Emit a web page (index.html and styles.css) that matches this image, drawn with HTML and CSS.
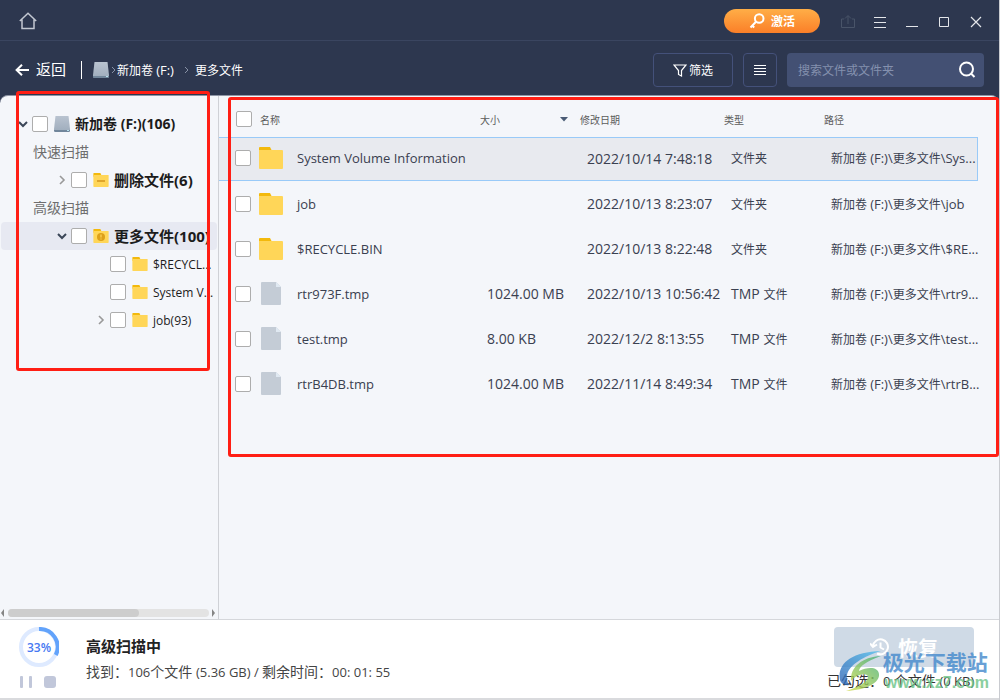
FILE: index.html
```html
<!DOCTYPE html>
<html lang="zh-CN">
<head>
<meta charset="utf-8">
<title>数据恢复</title>
<link rel="stylesheet" href="styles.css">
</head>
<body>
<svg class="defs" aria-hidden="true">
  <defs>
    <linearGradient id="disk-fill" x1="0" y1="0" x2="0" y2="1"><stop offset="0" stop-color="#b9c3d0"/><stop offset="1" stop-color="#9eacbc"/></linearGradient>
    <linearGradient id="swoosh-blue" x1="0" y1="1" x2="1" y2="0"><stop offset="0" stop-color="#2a62b5"/><stop offset="1" stop-color="#55c1ee"/></linearGradient>
    <linearGradient id="swoosh-green" x1="0" y1="1" x2="1" y2="0"><stop offset="0" stop-color="#d3dc45"/><stop offset="1" stop-color="#3fae7c"/></linearGradient>
    <symbol id="disk" viewBox="0 0 16 16"><path d="M1.500 0h13l1.500 13v2l-1 1H1l-1-1v-2z" fill="url(#disk-fill)"/><path d="M0 14h16v1l-1 1H1l-1-1z" fill="#71869b"/><path d="M13 14h2v1h-2z" fill="#b9e2ee"/></symbol>
    <symbol id="folder" viewBox="0 0 24 22"><path d="M0 1q0-1 1-1h10l1.500 3v3H0z" fill="#f3b90c"/><path d="M0 3h23q1 0 1 1v17q0 1-1 1H1q-1 0-1-1z" fill="#ffd658"/></symbol>
    <symbol id="file" viewBox="0 0 20 23"><path d="M1 0h14l5 5v17q0 1-1 1H1q-1 0-1-1V1q0-1 1-1z" fill="#c4ccd6"/><path d="M15 0l5 5h-5z" fill="#e0e9f2"/></symbol>
    <symbol id="down" viewBox="0 0 10 10"><path d="M1 3l4 4 4-4" fill="none" stroke="#3b4658" stroke-width="2"/></symbol>
    <symbol id="right" viewBox="0 0 10 10"><path d="M3 1l4 4-4 4" fill="none" stroke="#999" stroke-width="1.600"/></symbol>
  </defs>
</svg>
<div class="app">
  <header class="titlebar">
    <button class="plain" aria-label="主页"><svg width="18" height="18" viewBox="0 0 18 18" fill="none" stroke="#c3c8d2" stroke-width="1.500"><path d="M.8 9L9 1.200 17.200 9M3 7.500v9h12v-9"/></svg></button>
    <span class="spacer"></span>
    <button class="activate"><svg width="16" height="16" viewBox="0 0 16 16" fill="none" stroke="#fff" stroke-width="2"><circle cx="10.200" cy="5.500" r="4.300"/><path d="M7.200 8.500L1.500 14.500M3.200 12.500l2 2"/></svg><span>激活</span></button>
    <div class="window-buttons">
      <button class="plain" aria-label="导出"><svg width="16" height="16" viewBox="0 0 16 16" fill="none" stroke="#495469"><path d="M4 5H1.500v8.500h13V5H12M8 10V2M5 4.500L8 1.500l3 3"/></svg></button>
      <button class="plain" aria-label="菜单"><svg width="16" height="16" viewBox="0 0 16 16" stroke="#e4e6ea"><path d="M2 3.500h12M2 8.500h12M2 13.500h12"/></svg></button>
      <button class="plain" aria-label="最小化"><svg width="16" height="16" viewBox="0 0 16 16" stroke="#e4e6ea"><path d="M2 12.500h12"/></svg></button>
      <button class="plain" aria-label="最大化"><svg width="16" height="16" viewBox="0 0 16 16" fill="none" stroke="#e4e6ea"><path d="M3.500 3.500h9v9h-9z"/></svg></button>
      <button class="plain" aria-label="关闭"><svg width="16" height="16" viewBox="0 0 16 16" stroke="#e4e6ea" stroke-width="1.200"><path d="M3 3l10 10M13 3L3 13"/></svg></button>
    </div>
  </header>
  <div class="toolbar">
    <button class="plain back"><svg width="14" height="12" viewBox="0 0 14 12" fill="none" stroke="#fff" stroke-width="2"><path d="M14 6H1.500M7 .8L1.600 6 7 11.200"/></svg><span>返回</span></button>
    <nav class="crumbs">
      <svg width="16" height="16"><use href="#disk"/></svg>
      <svg class="sep-first" width="6" height="8" viewBox="0 0 6 8" fill="none" stroke="#8791a5"><path d="M1 1l3 3-3 3"/></svg>
      <a href="#">新加卷 <span class="lat">(F:)</span></a>
      <svg class="sep" width="6" height="8" viewBox="0 0 6 8" fill="none" stroke="#8791a5"><path d="M1 1l3 3-3 3"/></svg>
      <a href="#">更多文件</a>
    </nav>
    <button class="tool filter"><svg width="14" height="13" viewBox="0 0 14 13" fill="none" stroke="#fff" stroke-width="1.200"><path d="M1 1h12L8.500 6.500v5.500L5.500 10.500V6.500z"/></svg><span>筛选</span></button>
    <button class="tool view" aria-label="列表视图"><svg width="12" height="12" viewBox="0 0 12 12" stroke="#fff"><path d="M0 1.500h12M0 4.500h12M0 7.500h12M0 10.500h12"/></svg></button>
    <label class="search"><input type="text" placeholder="搜索文件或文件夹" aria-label="搜索文件或文件夹"><svg width="18" height="18" viewBox="0 0 18 18" fill="none" stroke="#fff" stroke-width="2"><circle cx="8.500" cy="8" r="6.500"/><path d="M13 12.500l3.500 3.500"/></svg></label>
  </div>
  <div class="body">
    <aside class="sidebar">
      <ul class="tree">
        <li class="node root"><svg class="arrow" width="10" height="10"><use href="#down"/></svg><input type="checkbox" id="n1"><svg width="16" height="16"><use href="#disk"/></svg><label for="n1">新加卷 (F:)(106)</label></li>
        <li class="group">快速扫描</li>
        <li class="node sub"><svg class="arrow" width="10" height="10"><use href="#right"/></svg><input type="checkbox" id="n2"><svg width="16" height="14" viewBox="0 0 16 14"><use href="#folder" width="16" height="14"/><path d="M4 8h8" stroke="#d4941c" stroke-width="1.500"/></svg><label for="n2">删除文件(6)</label></li>
        <li class="group">高级扫描</li>
        <li class="node sub selected"><svg class="arrow" width="10" height="10"><use href="#down"/></svg><input type="checkbox" id="n3"><svg width="16" height="14" viewBox="0 0 16 14"><use href="#folder" width="16" height="14"/><circle cx="8" cy="8" r="4" fill="#dda019"/><path d="M8 5.500v3M8 9.500v1" stroke="#ffd658" stroke-width="1.200"/></svg><label for="n3">更多文件(100)</label></li>
        <li class="node leaf"><span class="arrow"></span><input type="checkbox" id="n4"><svg width="16" height="14" viewBox="0 0 16 14"><use href="#folder" width="16" height="14"/></svg><label for="n4">$RECYCL...</label></li>
        <li class="node leaf"><span class="arrow"></span><input type="checkbox" id="n5"><svg width="16" height="14" viewBox="0 0 16 14"><use href="#folder" width="16" height="14"/></svg><label for="n5">System V...</label></li>
        <li class="node leaf"><svg class="arrow" width="10" height="10"><use href="#right"/></svg><input type="checkbox" id="n6"><svg width="16" height="14" viewBox="0 0 16 14"><use href="#folder" width="16" height="14"/></svg><label for="n6">job(93)</label></li>
      </ul>
      <div class="hscroll">
        <svg width="8" height="8" viewBox="0 0 8 8"><path d="M4 0v8L1 4z" fill="#858585"/></svg>
        <div class="track"><div class="thumb"></div></div>
        <svg width="9" height="8" viewBox="0 0 9 8"><path d="M3 0v8l3-4z" fill="#858585"/></svg>
      </div>
      <div class="mark mark-tree"></div>
    </aside>
    <main class="files">
      <table>
        <colgroup><col class="c-check"><col class="c-name"><col class="c-size"><col class="c-date"><col class="c-type"><col class="c-path"></colgroup>
        <thead><tr><th class="check"><input type="checkbox" aria-label="全选"></th><th>名称</th><th><span class="sortable">大小<svg width="8" height="5" viewBox="0 0 8 5"><path d="M0 0h8L4 4.500z" fill="#4a5b75"/></svg></span></th><th>修改日期</th><th>类型</th><th>路径</th></tr></thead>
        <tbody>
          <tr class="active"><td class="check"><input type="checkbox" id="f1"></td><td><label class="name" for="f1"><svg width="24" height="22"><use href="#folder"/></svg>System Volume Information</label></td><td></td><td>2022/10/14 7:48:18</td><td class="zh">文件夹</td><td class="zh">新加卷 <span class="lat">(F:)\</span>更多文件<span class="lat">\Sys...</span></td></tr>
          <tr><td class="check"><input type="checkbox" id="f2"></td><td><label class="name" for="f2"><svg width="24" height="22"><use href="#folder"/></svg>job</label></td><td></td><td>2022/10/13 8:23:07</td><td class="zh">文件夹</td><td class="zh">新加卷 <span class="lat">(F:)\</span>更多文件<span class="lat">\job</span></td></tr>
          <tr><td class="check"><input type="checkbox" id="f3"></td><td><label class="name" for="f3"><svg width="24" height="22"><use href="#folder"/></svg>$RECYCLE.BIN</label></td><td></td><td>2022/10/13 8:22:48</td><td class="zh">文件夹</td><td class="zh">新加卷 <span class="lat">(F:)\</span>更多文件<span class="lat">\$RE...</span></td></tr>
          <tr><td class="check"><input type="checkbox" id="f4"></td><td><label class="name" for="f4"><svg width="24" height="23"><use href="#file"/></svg>rtr973F.tmp</label></td><td>1024.00 MB</td><td>2022/10/13 10:56:42</td><td class="zh"><span class="tmp">TMP </span>文件</td><td class="zh">新加卷 <span class="lat">(F:)\</span>更多文件<span class="lat">\rtr9...</span></td></tr>
          <tr><td class="check"><input type="checkbox" id="f5"></td><td><label class="name" for="f5"><svg width="24" height="23"><use href="#file"/></svg>test.tmp</label></td><td>8.00 KB</td><td>2022/12/2 8:13:55</td><td class="zh"><span class="tmp">TMP </span>文件</td><td class="zh">新加卷 <span class="lat">(F:)\</span>更多文件<span class="lat">\test...</span></td></tr>
          <tr><td class="check"><input type="checkbox" id="f6"></td><td><label class="name" for="f6"><svg width="24" height="23"><use href="#file"/></svg>rtrB4DB.tmp</label></td><td>1024.00 MB</td><td>2022/11/14 8:49:34</td><td class="zh"><span class="tmp">TMP </span>文件</td><td class="zh">新加卷 <span class="lat">(F:)\</span>更多文件<span class="lat">\rtrB...</span></td></tr>
        </tbody>
      </table>
      <div class="mark mark-files"></div>
    </main>
  </div>
  <footer class="status">
    <div class="progress">
      <div class="ring"><svg width="40" height="40" viewBox="0 0 40 40" fill="none" stroke-width="4"><circle cx="20" cy="20" r="18" stroke="#deeaff"/><path d="M20 2A18 18 0 0 1 36.800 28" stroke="#62a3fb"/></svg><span class="percent">33%</span></div>
      <div class="controls">
        <button class="plain" aria-label="暂停"><svg width="12" height="12" viewBox="0 0 12 12" fill="#c1c7da"><rect width="3" height="12" rx="1"/><rect x="9" width="3" height="12" rx="1"/></svg></button>
        <button class="plain" aria-label="停止"><svg width="12" height="12" viewBox="0 0 12 12" fill="#c1c7da"><rect width="12" height="12" rx="3"/></svg></button>
      </div>
    </div>
    <div class="scan">
      <div class="scan-title">高级扫描中</div>
      <div class="scan-info"><span>找到：</span><span><span class="lat">106</span>个文件 <span class="lat">(5.36 GB) / </span>剩余时间：</span><span class="lat">00: 01: 55</span></div>
    </div>
    <div class="recover-area">
      <button class="recover" disabled><svg width="20" height="18" viewBox="0 0 20 18" fill="none" stroke="#fff" stroke-width="2"><path d="M3 8A7.500 7.500 0 1 1 7 15.500M0 5.500L3 9l4-2.500M10.500 4.500V9.500l3.500 2"/></svg><span>恢复</span></button>
      <div class="selected-info">已勾选：<span class="lat">0 </span>个文件 <span class="lat">(0 KB)</span></div>
      <div class="watermark">
        <svg width="44" height="42" viewBox="0 0 44 42"><path d="M1 30C-2 14 12 2 42 1 25 6 10 15 8 25c-.5 3 0 7 2 10C5 36 2 33 1 30z" fill="url(#swoosh-blue)"/><path d="M12 31c-1-14 11-24 30-25-15 5-22 11-22 15 8-4 19-5 20 3 1 9-13 16-33 17 10-3 22-9 22-14 0-5-12-3-17 4z" fill="url(#swoosh-green)"/></svg>
        <div><div class="wm-name">极光下载站</div><div class="wm-url">www.xz7.com</div></div>
      </div>
    </div>
  </footer>
</div>
</body>
</html>
```
FILE: styles.css
```css
* { box-sizing: border-box; }
body {
  margin: 0;
  font-family: "Open Sans", "Noto Sans CJK SC", sans-serif;
  font-size: 13px;
  color: #3a4050;
}
.defs { position: absolute; width: 0; height: 0; }
svg { flex: none; display: block; }
button { font: inherit; padding: 0; }
.plain { border: 0; background: none; color: inherit; }
.app {
  display: flex;
  flex-direction: column;
  height: 100vh;
  background: #2d374f;
  border-right: 1px solid #c9cbd0;
}
.spacer { flex: 1; }
.lat { font-size: 13px; }
.tmp { font-size: 14px; }

.titlebar {
  display: flex;
  align-items: center;
  height: 41px;
  flex: none;
  padding: 2px 15px 0 19px;
  border-bottom: 1px solid #3a4560;
}
.activate {
  display: flex;
  align-items: center;
  justify-content: center;
  gap: 6px;
  width: 96px;
  height: 24px;
  border: 0;
  border-radius: 12px;
  background: linear-gradient(#ffae47, #fb7f28);
  color: #fff;
  font-size: 12px;
  font-weight: 700;
}
.window-buttons { display: flex; gap: 16px; margin-left: 20px; padding-top: 2px; }

.toolbar {
  display: flex;
  align-items: center;
  height: 54px;
  flex: none;
  padding: 4px 15px 0;
  color: #fff;
  font-size: 12px;
}
.back { display: flex; align-items: center; gap: 7px; font-size: 15px; line-height: 20px; padding-right: 15px; border-right: 1px solid #fff; }
.back span { margin-top: -2px; }
.crumbs { display: flex; align-items: center; flex: 1; margin-left: 11px; white-space: nowrap; }
.crumbs a { color: #fff; text-decoration: none; }
.sep-first { margin: 0 0 0 2px; }
.sep { margin: 0 5px 0 10px; }
.tool {
  display: flex;
  align-items: center;
  justify-content: center;
  gap: 2px;
  height: 34px;
  border: 1px solid #44517a;
  border-radius: 4px;
  background: none;
  color: #fff;
}
.filter { width: 80px; margin-right: 10px; }
.view { width: 34px; margin-right: 10px; }
.search {
  display: flex;
  align-items: center;
  width: 197px;
  height: 34px;
  padding: 0 8px 0 11px;
  border-radius: 4px;
  background: #435073;
}
.search input { flex: 1; min-width: 0; padding: 0; border: 0; outline: 0; background: none; font: inherit; color: #fff; }
.search input::placeholder { color: #8490ae; opacity: 1; }

.body {
  display: flex;
  flex: 1;
  min-height: 0;
  background: #f4f6fa;
  border-top: 1px solid #8e95a5;
  border-radius: 8px 8px 0 0;
}
input[type="checkbox"] {
  appearance: none;
  flex: none;
  display: block;
  width: 16px;
  height: 16px;
  margin: 0;
  border: 1px solid #adadad;
  border-radius: 2px;
  background: #fff;
}
.sidebar {
  position: relative;
  display: flex;
  flex-direction: column;
  width: 219px;
  flex: none;
  border-right: 1px solid #cfd1d6;
}
.tree { flex: 1; margin: 0; padding: 14px 1px 0; list-style: none; color: #1c1c1c; }
.tree li { height: 28px; line-height: 28px; white-space: nowrap; }
.node { display: flex; align-items: center; }
.arrow { width: 10px; margin-right: 4px; }
.node input { margin-right: 6px; }
.node label { margin-left: 5px; }
.root { padding-left: 17px; }
.sub { padding-left: 56px; }
.leaf { padding-left: 95px; }
.root label, .sub label { font-size: 15px; font-weight: 700; }
.root label { font-size: 14px; }
.leaf label { font-size: 12px; padding-top: 1px; }
.group { padding-left: 32px; font-size: 14px; color: #6e6e6e; }
.selected { background: #e7e9f2; border-radius: 4px; }
.hscroll { display: flex; align-items: center; height: 12px; }
.track { flex: 1; height: 8px; border-radius: 4px; background: #e3e3e3; }
.thumb { width: 65%; height: 8px; border-radius: 4px; background: #cdcdcd; }

.files { position: relative; flex: 1; min-width: 0; padding: 1px 21px 0 0; }
table { width: 100%; border-collapse: separate; border-spacing: 0; table-layout: fixed; }
.c-check { width: 41px; }
.c-name { width: 220px; }
.c-size { width: 100px; }
.c-date { width: 144px; }
.c-type { width: 100px; }
th { height: 40px; padding: 5px 0 0; text-align: left; font-size: 10px; font-weight: 400; color: #5c5c5c; }
td { height: 45px; padding: 0 0 2px 7px; font-size: 14px; white-space: nowrap; }
td.zh { font-size: 12px; }
th.check { padding: 4px 0 0 17px; }
td.check { padding: 0 0 2px 16px; }
td:nth-child(2) { padding: 0 0 2px; }
.sortable { display: flex; align-items: center; justify-content: space-between; padding-right: 12px; }
.name { display: flex; align-items: center; gap: 14px; margin-left: -1px; font-size: 13px; }
.active td { height: 44px; background: #e8eaef; border-top: 1px solid #99caf8; border-bottom: 1px solid #99caf8; }
.active td:last-child { border-right: 1px solid #99caf8; }
.active + tr td { height: 46px; padding-top: 1px; }

.mark { position: absolute; border: 3px solid #ff1e14; border-radius: 3px; pointer-events: none; }
.mark-tree { top: -5px; left: 16px; right: 8px; height: 280px; }
.mark-files { top: 1px; left: 9px; right: 0; height: 360px; }

.status {
  display: flex;
  flex: none;
  height: 81px;
  padding: 7px 10px 0 19px;
  background: #fff;
  border-top: 1px solid #d5d7db;
  border-bottom: 2px solid #d9dadd;
}
.progress { width: 40px; }
.ring { display: grid; place-items: center; }
.ring svg, .percent { grid-area: 1 / 1; }
.percent { font-size: 12px; font-weight: 600; color: #4678f2; }
.controls { display: flex; gap: 12px; margin-top: 9px; padding-left: 1px; }
.scan { flex: 1; margin-left: 27px; padding-top: 8px; color: #222; white-space: nowrap; }
.scan-title { font-size: 15px; font-weight: 700; line-height: 22px; }
.scan-info { display: flex; align-items: baseline; margin-top: 4px; line-height: 22px; font-size: 14px; color: #444; }
.recover-area { position: relative; width: 164px; }
.recover {
  display: flex;
  align-items: center;
  justify-content: center;
  gap: 8px;
  width: 140px;
  height: 40px;
  margin-left: 9px;
  border: 0;
  border-radius: 4px;
  background: #cfdae6;
  color: #fff;
  font-size: 20px;
  font-weight: 700;
}
.selected-info { margin-top: 4px; margin-left: 2px; font-size: 14px; line-height: 20px; color: #333; white-space: nowrap; }
.watermark { position: absolute; top: 23px; right: 0; display: flex; opacity: 0.8; white-space: nowrap; }
.wm-name { font-size: 21px; font-weight: 700; line-height: 24px; color: #4489cc; }
.wm-url { margin-left: 2px; font-family: "Liberation Sans", sans-serif; font-size: 16px; font-weight: 700; line-height: 18px; color: #6cc487; }
```
